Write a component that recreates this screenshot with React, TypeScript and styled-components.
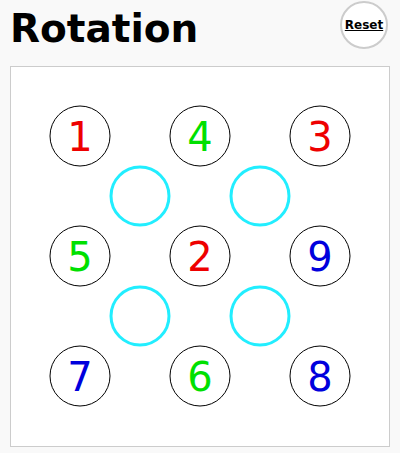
import * as React from 'react';
import styled, { createGlobalStyle } from 'styled-components';

const GlobalStyle = createGlobalStyle`
	html, body {
		margin: 0;
		padding: 0;
		background: #f9f9f9;
		font-family: "DejaVu Sans", Verdana, sans-serif;
	}
`;

const Page = styled.div`
	width: 400px;
	height: 453px;
	padding: 0 10px;
	box-sizing: border-box;
`;

const Header = styled.div`
	display: flex;
	justify-content: space-between;
	align-items: flex-start;
	height: 66px;
`;

const Title = styled.h1`
	margin: 6px 0 0 0;
	font-size: 39px;
	font-weight: bold;
	line-height: 46px;
	color: #000;
`;

const ResetButton = styled.button`
	width: 48px;
	height: 48px;
	margin: 1px 2px 0 0;
	border-radius: 50%;
	border: 2px solid #ccc;
	background: #fff;
	padding: 0;
	font-family: "DejaVu Sans", Verdana, sans-serif;
	font-size: 12px;
	font-weight: bold;
	text-decoration: underline;
	color: #000;
	cursor: pointer;
`;

const Board = styled.div`
	width: 380px;
	height: 381px;
	box-sizing: border-box;
	border: 1px solid #ccc;
	background: #fff;
`;

const colors: Record<string, string> = {
	r: '#ee0000',
	g: '#00e000',
	b: '#0000dd',
};

const tiles = [
	{ n: 1, c: 'r' }, { n: 4, c: 'g' }, { n: 3, c: 'r' },
	{ n: 5, c: 'g' }, { n: 2, c: 'r' }, { n: 9, c: 'b' },
	{ n: 7, c: 'b' }, { n: 6, c: 'g' }, { n: 8, c: 'b' },
];

const pivots = [[130, 130], [250, 130], [130, 250], [250, 250]];

export default function App() {
	return (
		<Page>
			<GlobalStyle />
			<Header>
				<Title>Rotation</Title>
				<ResetButton>Reset</ResetButton>
			</Header>
			<Board>
				<svg width="378" height="379" viewBox="0 0 378 379">
					{pivots.map(([x, y], i) => (
						<circle key={i} cx={x - 1} cy={y - 1} r={29} fill="none" stroke="#22eeff" strokeWidth={3} />
					))}
					{tiles.map((t, i) => {
						const x = 69 + (i % 3) * 120;
						const y = 69 + Math.floor(i / 3) * 120;
						return (
							<g key={t.n}>
								<circle cx={x} cy={y} r={30} fill="none" stroke="#000" strokeWidth={1} />
								<text
									x={x}
									y={y + 15}
									textAnchor="middle"
									fontSize={40}
									fontFamily='"DejaVu Sans", Verdana, sans-serif'
									fill={colors[t.c]}
								>
									{t.n}
								</text>
							</g>
						);
					})}
				</svg>
			</Board>
		</Page>
	);
}
